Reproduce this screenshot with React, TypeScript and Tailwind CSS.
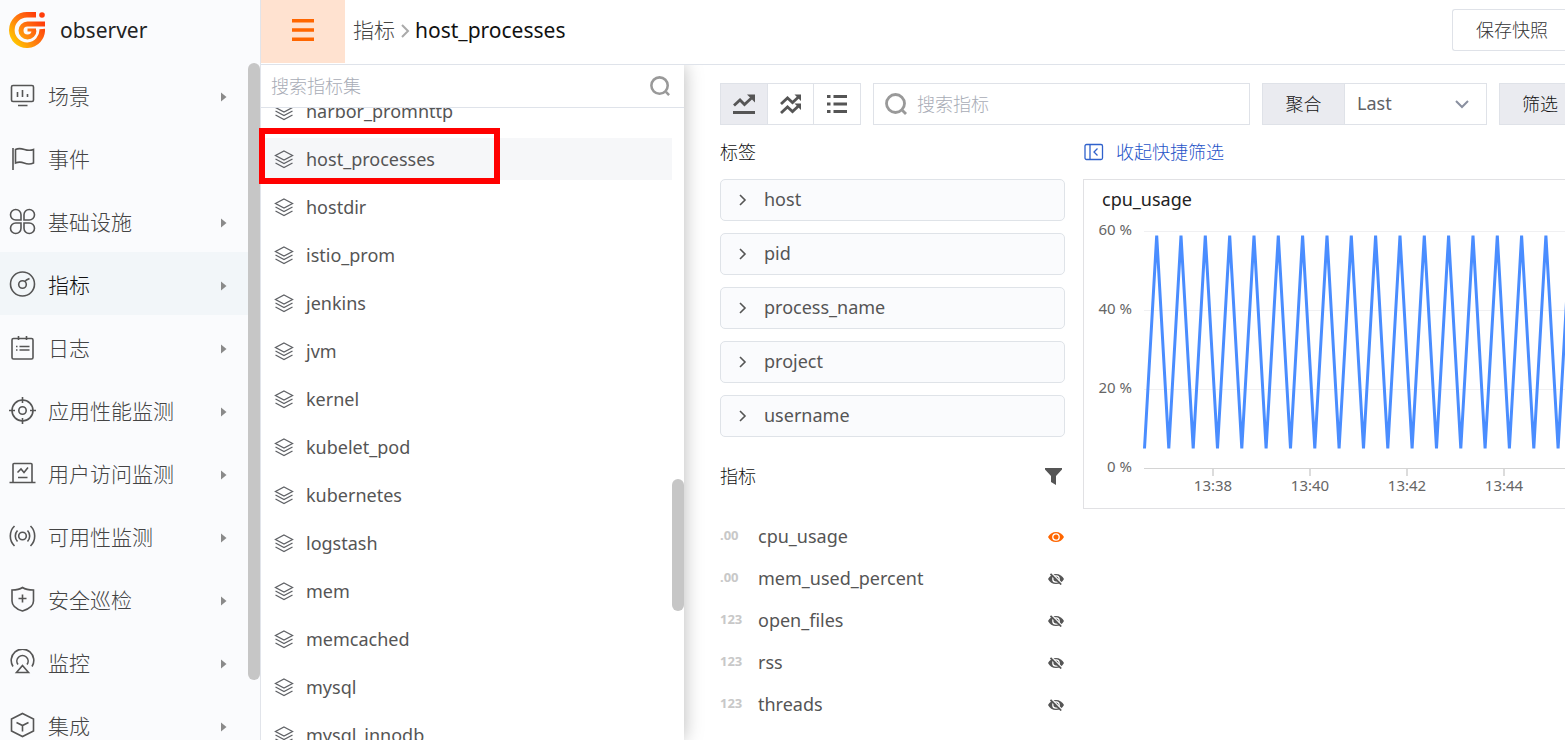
import type { ReactNode } from "react";

const MENU: { label: string; arrow: boolean; active?: boolean; icon: ReactNode }[] = [
  {
    label: "场景",
    arrow: true,
    icon: (
      <>
        <rect x="2.5" y="3.5" width="22" height="16" rx="1.5" />
        <path d="M8.5 10v5M13.5 8v7M18.5 12v3M9 23.5h9.5" />
      </>
    ),
  },
  {
    label: "事件",
    arrow: false,
    icon: <path d="M4 3v22M6.5 4.5c3-1.600 6-1 9 0s6 1.200 9 0v13.500c-3 1.400-6.500 1.200-9.500 0s-6-1-8.500 0z" />,
  },
  {
    label: "基础设施",
    arrow: true,
    icon: (
      <path d="M12 6.750V12H6.750A5.250 5.250 0 1 1 12 6.750zM15 6.750V12h5.250A5.250 5.250 0 1 0 15 6.750zM12 20.250V15H6.750A5.250 5.250 0 1 0 12 20.250zM15 20.250V15h5.250A5.250 5.250 0 1 1 15 20.250z" />
    ),
  },
  {
    label: "指标",
    arrow: true,
    active: true,
    icon: (
      <>
        <circle cx="13.500" cy="13" r="12" />
        <circle cx="13.500" cy="13.500" r="3.800" />
        <path d="M16 10.500l1.500-1.500 3-1.500" />
      </>
    ),
  },
  {
    label: "日志",
    arrow: true,
    icon: (
      <>
        <rect x="3" y="4.500" width="21" height="20.500" rx="1.500" />
        <path d="M9.500 2v4M17.500 2v4M7 12.500h1.500M7 16h1.500M10.500 12.500H20.500M10.500 16H20.500" />
      </>
    ),
  },
  {
    label: "应用性能监测",
    arrow: true,
    icon: (
      <>
        <circle cx="13.500" cy="13.500" r="10.500" />
        <circle cx="13.500" cy="13.500" r="3.700" />
        <path d="M13.500 0v6M13.500 21v6M0 13.500h6M21 13.500h6" />
      </>
    ),
  },
  {
    label: "用户访问监测",
    arrow: true,
    icon: (
      <path d="M4 22.500V4.500a1 1 0 0 1 1-1h17a1 1 0 0 1 1 1v18M0.500 22.500h26M8.500 12.500l3.500-3.500 3 3.500 4-5M9 17.500h9.500" />
    ),
  },
  {
    label: "可用性监测",
    arrow: true,
    icon: (
      <>
        <circle cx="13.500" cy="13" r="3.800" />
        <path d="M8.500 7.500a8 8 0 0 0 0 11M18.500 7.500a8 8 0 0 1 0 11M5.500 3a14 14 0 0 0 0 20M21.500 3a14 14 0 0 1 0 20" />
      </>
    ),
  },
  {
    label: "安全巡检",
    arrow: true,
    icon: (
      <path d="M13.500 1.500c3 2 7 2.500 11 2.500v11c0 5-6 8.500-11 10-5-1.500-10.500-5-10.500-10V4c4 0 7.500-.5 10.500-2.500zM13.500 8.500v8M9.500 12.500h8" />
    ),
  },
  {
    label: "监控",
    arrow: true,
    icon: (
      <path d="M4 17.500a11.300 11.300 0 1 1 19 0M9 15.500a5.600 5.600 0 1 1 9 0M13.500 16.500l6 7h-12z" />
    ),
  },
  {
    label: "集成",
    arrow: true,
    icon: <path d="M13.500 1.500l11 5.500v12l-11 5.500-11-5.500V7zM7.500 10.500l6 3 6-3M13.500 13.500v6" />,
  },
];

const SETS = [
  "harbor_promhttp",
  "host_processes",
  "hostdir",
  "istio_prom",
  "jenkins",
  "jvm",
  "kernel",
  "kubelet_pod",
  "kubernetes",
  "logstash",
  "mem",
  "memcached",
  "mysql",
  "mysql_innodb",
];

const TAGS = ["host", "pid", "process_name", "project", "username"];

const METRICS = [
  { kind: ".00", name: "cpu_usage", shown: true },
  { kind: ".00", name: "mem_used_percent", shown: false },
  { kind: "123", name: "open_files", shown: false },
  { kind: "123", name: "rss", shown: false },
  { kind: "123", name: "threads", shown: false },
];

const SERIES = Array.from({ length: 100 }, (_, i) => `${(60.5 + i * 12.165).toFixed(1)},${i % 2 ? 55.5 : 268.5}`).join(" ");

const GRID = [
  { y: 51, label: "60 %" },
  { y: 130, label: "40 %" },
  { y: 209, label: "20 %" },
  { y: 288, label: "0 %" },
];

const TICKS = ["13:38", "13:40", "13:42", "13:44"];

function Logo() {
  return (
    <svg width="36" height="36" viewBox="0 0 36 36" fill="none" aria-hidden="true">
      <defs>
        <linearGradient id="logo" gradientUnits="userSpaceOnUse" x1="3" y1="28" x2="30" y2="6">
          <stop offset="0" stopColor="#ffc400" />
          <stop offset="0.5" stopColor="#ff7a10" />
          <stop offset="1" stopColor="#ff3d0a" />
        </linearGradient>
      </defs>
      <g stroke="url(#logo)">
        <path d="M27 2.800H18a15.200 15.200 0 1 0 15.200 14.200" strokeWidth="5.600" />
        <path d="M36 12H18.500a6.500 6.500 0 1 0 6.500 6.500" strokeWidth="5" />
        <path d="M27 18H18.500" strokeWidth="3" />
      </g>
      <circle cx="33" cy="3" r="2.800" fill="#ff3d0a" />
    </svg>
  );
}

function SearchIcon({ size }: { size: number }) {
  return (
    <svg width={size} height={size} viewBox="0 0 22 22" fill="none" stroke="#999" strokeWidth="2.800" aria-hidden="true">
      <circle cx="10.500" cy="10.500" r="9" />
      <path d="M17.500 17.500l3.500 3.500" />
    </svg>
  );
}

function LayersIcon() {
  return (
    <svg width="20" height="20" viewBox="0 0 20 20" fill="none" stroke="#606266" strokeWidth="1.300" aria-hidden="true">
      <path d="M10 2l8.500 4.500-8.500 4.500L1.500 6.500zM1.500 10l8.500 4.500 8.500-4.500M1.500 14l8.500 4.500 8.500-4.500" />
    </svg>
  );
}

function EyeIcon({ shown }: { shown: boolean }) {
  return shown ? (
    <svg width="16" height="12" viewBox="0 0 16 12" aria-hidden="true">
      <path d="M8 1C4.500 1 1.500 3 0 6c1.500 3 4.500 5 8 5s6.500-2 8-5c-1.500-3-4.500-5-8-5z" fill="#ff6600" />
      <circle cx="8" cy="6" r="3.200" fill="none" stroke="#fff" strokeWidth="1.300" />
    </svg>
  ) : (
    <svg width="16" height="12" viewBox="0 0 16 12" aria-hidden="true">
      <path d="M8 1C4.500 1 1.500 3 0 6c1.500 3 4.500 5 8 5s6.500-2 8-5c-1.500-3-4.500-5-8-5z" fill="#555" />
      <circle cx="8" cy="6" r="3.200" fill="none" stroke="#fff" strokeWidth="1.300" />
      <path d="M3.500 0l10.500 10.500" stroke="#fff" strokeWidth="1.300" />
      <path d="M2.500 .8l10.700 10.700" stroke="#555" strokeWidth="1.700" />
    </svg>
  );
}

function Sidebar() {
  return (
    <aside className="relative flex w-[261px] shrink-0 flex-col border-r border-[#e1e4ea] bg-[#fafbfd]">
      <div className="flex h-[63px] shrink-0 items-center gap-[15px] pb-1 pl-[9px] text-[21px] text-[#222]">
        <Logo />
        <span className="pt-0.5">observer</span>
      </div>
      <nav className="mr-3">
        {MENU.map((item) => (
          <a
            key={item.label}
            href="#"
            className={
              item.active
                ? "flex h-[63px] items-center bg-[#f2f6f9] pt-0.5 pr-[21px] pl-[9px] text-[#111]"
                : "flex h-[63px] items-center pt-0.5 pr-[21px] pl-[9px] text-[#444]"
            }
          >
            <svg
              width="27"
              height="27"
              viewBox="0 0 27 27"
              fill="none"
              stroke="#555"
              strokeWidth="1.600"
              aria-hidden="true"
              className="mr-3"
            >
              {item.icon}
            </svg>
            <span className="flex-1 text-[21px] leading-[30px] font-light">{item.label}</span>
            {item.arrow && (
              <svg width="7" height="10" viewBox="0 0 7 10" fill="#8a8a8a" aria-hidden="true" className="mt-0.5">
                <path d="M1 0.500l5.500 4.500L1 9.500z" />
              </svg>
            )}
          </a>
        ))}
      </nav>
      <div className="absolute top-[63px] right-0 h-[617px] w-3 rounded-full bg-[#c6c6c6]" />
    </aside>
  );
}

function SetPanel() {
  return (
    <section className="relative z-10 flex w-[423px] shrink-0 flex-col bg-white shadow-[0_0_18px_rgba(0,0,0,0.28)]">
      <div className="flex h-[43px] shrink-0 items-center border-b border-[#dfe3ea] pr-3.5 pl-2.5">
        <input
          aria-label="搜索指标集"
          placeholder="搜索指标集"
          className="min-w-0 flex-1 text-[18px] font-light outline-none placeholder:text-[#a8acb6]"
        />
        <SearchIcon size={20} />
      </div>
      <div className="relative min-h-0 flex-1 overflow-hidden">
        <ul className="-mt-[18px] mr-3 flex flex-col gap-1.5">
          {SETS.map((name) => (
            <li key={name}>
              <a
                href="#"
                className={
                  name === "host_processes"
                    ? "flex h-[42px] items-center gap-3 bg-[#f6f7f9] pl-[13px] text-[18px] text-[#555]"
                    : "flex h-[42px] items-center gap-3 pl-[13px] text-[18px] text-[#555]"
                }
              >
                <LayersIcon />
                {name}
              </a>
            </li>
          ))}
        </ul>
        <div className="absolute top-[371px] right-0 h-[132px] w-3 rounded-full bg-[#c6c6c6]" />
      </div>
    </section>
  );
}

function Toolbar() {
  return (
    <div className="flex h-[42px] gap-3">
      <div className="flex shrink-0 divide-x divide-[#dfe2e8] border border-[#dfe2e8]">
        <button aria-label="单图" className="flex w-[47px] items-center justify-center bg-[#eaebf0]">
          <svg width="22" height="20" viewBox="0 0 22 20" fill="none" stroke="#555" strokeWidth="2.800" aria-hidden="true">
            <path d="M1 11.500L7 6l4.500 4.500L18.500 4M0 18.500h22" />
            <path d="M14 .5h8v8z" fill="#555" stroke="none" />
          </svg>
        </button>
        <button aria-label="多图" className="flex w-[46px] items-center justify-center bg-white">
          <svg width="22" height="22" viewBox="0 0 22 22" fill="none" stroke="#555" strokeWidth="2.800" aria-hidden="true">
            <path d="M1 11L7.500 5l5 4.500L18.500 4M1 20l6.500-6 5 4.500 6-5.500" />
            <path d="M14.500 1.500H21V8zM14.500 10.500H21V17z" fill="#555" stroke="none" />
          </svg>
        </button>
        <button aria-label="列表" className="flex w-[46px] items-center justify-center bg-white">
          <svg width="22" height="22" viewBox="0 0 22 22" stroke="#555" strokeWidth="3" aria-hidden="true">
            <path d="M1 3.500h3.500M7.500 3.500H21M1 11h3.500M7.500 11H21M1 18.500h3.500M7.500 18.500H21" />
          </svg>
        </button>
      </div>
      <div className="flex min-w-0 flex-1 items-center gap-2.5 border border-[#dfe2e8] pl-[11px]">
        <SearchIcon size={22} />
        <input
          aria-label="搜索指标"
          placeholder="搜索指标"
          className="min-w-0 flex-1 text-[18px] font-light outline-none placeholder:text-[#a8acb6]"
        />
      </div>
      <div className="flex w-[225px] shrink-0 border border-[#dfe2e8]">
        <label
          htmlFor="aggregate"
          className="flex w-[82px] items-center justify-center border-r border-[#dfe2e8] bg-[#eaebf0] text-[18px] font-light text-[#111]"
        >
          聚合
        </label>
        <div className="relative flex flex-1 items-center">
          <select
            id="aggregate"
            className="h-full w-full appearance-none bg-transparent pb-0.5 pl-3 text-[18px] text-[#606266] outline-none"
          >
            <option>Last</option>
          </select>
          <svg
            width="16"
            height="10"
            viewBox="0 0 16 10"
            fill="none"
            stroke="#8a90a0"
            strokeWidth="2"
            aria-hidden="true"
            className="pointer-events-none absolute right-4"
          >
            <path d="M2 2l6 6 6-6" />
          </svg>
        </div>
      </div>
      <button className="flex w-[66px] shrink-0 items-center border border-r-0 border-[#dfe2e8] bg-[#eaebf0] pl-[22px] text-[18px] font-light whitespace-nowrap text-[#111]">
        筛选
      </button>
    </div>
  );
}

function Chart() {
  return (
    <figure className="border border-r-0 border-[#e1e1e4] bg-white">
      <svg className="block h-[328px] w-full" role="img" aria-label="cpu_usage">
        <text x="18" y="26" fontSize="18" fill="#222">
          cpu_usage
        </text>
        {GRID.map((g) => (
          <g key={g.label}>
            <rect x="60" y={g.y} width="100%" height="1" fill={g.y === 288 ? "#d4d4d4" : "#f0f0f2"} />
            <text x="48" y={g.y + 4} textAnchor="end" fontSize="15" fill="#666">
              {g.label}
            </text>
          </g>
        ))}
        {TICKS.map((t, i) => (
          <g key={t}>
            <rect x={128 + i * 97} y="289" width="2" height="7" fill="#dcdcdc" />
            <text x={129 + i * 97} y="311" textAnchor="middle" fontSize="15" fill="#666">
              {t}
            </text>
          </g>
        ))}
        <polyline points={SERIES} fill="none" stroke="#4a8dff" strokeWidth="3" strokeLinejoin="bevel" />
      </svg>
    </figure>
  );
}

export default function App() {
  return (
    <div className="relative flex h-screen overflow-hidden bg-white font-['Noto_Sans','Noto_Sans_CJK_SC',sans-serif]">
      <Sidebar />
      <div className="flex min-w-0 flex-1 flex-col">
        <header className="flex h-[65px] shrink-0 border-b border-[#dfe3ea]">
          <button aria-label="菜单" className="flex h-[63px] w-[84px] shrink-0 items-center justify-center bg-[#ffe2d0]">
            <svg width="22" height="22" viewBox="0 0 22 22" fill="#ff6600" aria-hidden="true" className="-mt-1">
              <path d="M0 0h22v3.500H0zM0 9.250h22v3.500H0zM0 18.500h22V22H0z" />
            </svg>
          </button>
          <div className="flex min-w-0 flex-1 items-center pb-0.5 pl-2 text-[21px]">
            <a href="#" className="font-light text-[#444]">
              指标
            </a>
            <svg width="10" height="14" viewBox="0 0 10 14" fill="none" stroke="#aaa" strokeWidth="2" aria-hidden="true" className="mx-[5px]">
              <path d="M2 1l6 6-6 6" />
            </svg>
            <h1 className="text-[#111]">host_processes</h1>
          </div>
          <button className="mt-[9px] flex h-[42px] w-[113px] shrink-0 items-center rounded-l-[3px] border border-r-0 border-[#dfe2e8] pl-[23px] text-[18px] font-light whitespace-nowrap text-[#333]">
            保存快照
          </button>
        </header>
        <div className="flex min-h-0 flex-1 overflow-hidden">
          <SetPanel />
          <main className="flex min-w-0 flex-1 flex-col pt-[18px] pl-9">
            <Toolbar />
            <div className="flex gap-[18px]">
              <div className="w-[345px] shrink-0">
                <h2 className="flex h-[54px] items-center text-[18px] font-light text-[#111]">标签</h2>
                <ul className="flex flex-col gap-3">
                  {TAGS.map((tag) => (
                    <li key={tag}>
                      <button className="flex h-[42px] w-full items-center gap-4 rounded-[5px] border border-[#dfe3e8] bg-[#fafbfd] pl-[17px] text-[18px] text-[#555]">
                        <svg width="10" height="12" viewBox="0 0 10 12" fill="none" stroke="#555" strokeWidth="1.600" aria-hidden="true">
                          <path d="M2 1l5 5-5 5" />
                        </svg>
                        <span className="pb-0.5">{tag}</span>
                      </button>
                    </li>
                  ))}
                </ul>
                <div className="flex h-[78px] items-center justify-between pr-[3px]">
                  <h2 className="pt-px text-[18px] font-light text-[#111]">指标</h2>
                  <button aria-label="过滤">
                    <svg width="17" height="17" viewBox="0 0 17 17" fill="#555" aria-hidden="true">
                      <path d="M0 0h17v1.500L11 8v9l-5-3V8L0 1.500z" />
                    </svg>
                  </button>
                </div>
                <ul>
                  {METRICS.map((m) => (
                    <li key={m.name} className="flex h-[42px] items-center pr-px text-[#555]">
                      <span className="w-[38px] text-[13px] font-bold text-[#c8c8c8]">{m.kind}</span>
                      <span className="flex-1 text-[18px]">{m.name}</span>
                      <button aria-label={m.name} className="pt-0.5">
                        <EyeIcon shown={m.shown} />
                      </button>
                    </li>
                  ))}
                </ul>
              </div>
              <div className="min-w-0 flex-1">
                <a href="#" className="flex h-[54px] items-center gap-3 pl-px text-[18px] font-light text-[#1f54c8]">
                  <svg width="20" height="18" viewBox="0 0 20 18" fill="none" stroke="#2f61cc" strokeWidth="1.300" aria-hidden="true">
                    <rect x="1" y="1.500" width="17.500" height="15" rx="1.500" />
                    <path d="M6 1.500v15M13.500 5.500L10 9l3.500 3.500" />
                  </svg>
                  收起快捷筛选
                </a>
                <Chart />
              </div>
            </div>
          </main>
        </div>
      </div>
      <div className="pointer-events-none absolute top-[128px] left-[259px] z-20 h-14 w-[241px] border-6 border-[#ff0000]" />
    </div>
  );
}
